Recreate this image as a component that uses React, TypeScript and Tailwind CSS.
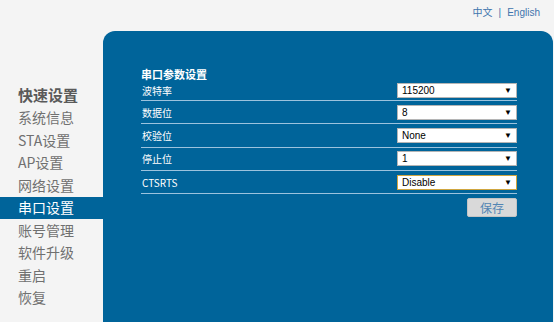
import { useState } from "react";

const menu = [
  "系统信息",
  "STA设置",
  "AP设置",
  "网络设置",
  "串口设置",
  "账号管理",
  "软件升级",
  "重启",
  "恢复",
];

const rows = [
  { label: "波特率", value: "115200", first: true },
  { label: "数据位", value: "8" },
  { label: "校验位", value: "None" },
  { label: "停止位", value: "1" },
  { label: "CTSRTS", value: "Disable", focus: true },
];

const Select = ({ value, focus }: { value: string; focus?: boolean }) => (
  <div
    className={`relative w-[120px] h-[15px] bg-white border flex items-center pl-[4px] font-['Liberation_Sans',Arial,sans-serif] text-[10px] text-black ${
      focus ? "border-[#d0a640]" : "border-[#b5b5b5]"
    }`}
  >
    {value}
    <span className="absolute right-[4px] top-[3px] text-[8px] leading-none">▼</span>
  </div>
);

export default function App() {
  const [active] = useState(4);
  return (
    <div className="w-[554px] h-[322px] overflow-hidden bg-[#f4f4f4] font-['Noto_Sans_CJK_SC','Noto_Sans',sans-serif]">
      <div className="h-[31px] flex justify-end pt-[5px] pr-[14px] text-[10px] text-[#3f74ad] font-['Liberation_Sans','Noto_Sans_CJK_SC',sans-serif]">
        <span>中文</span>
        <span className="mx-[6px]">|</span>
        <span>English</span>
      </div>
      <div className="flex">
        <div className="w-[103px] shrink-0 pt-[53px]">
          <div className="h-[22.5px] pl-[18px] flex items-center text-[15px] font-bold text-[#5a5a5a]">
            快速设置
          </div>
          {menu.map((m, i) => (
            <div
              key={m}
              className={`h-[22.5px] pl-[18px] flex items-center text-[14px] ${
                i === active ? "bg-[#00649a] text-white" : "text-[#707070]"
              }`}
            >
              {m}
            </div>
          ))}
        </div>
        <div className="flex-1 mr-[1px] h-[291px] bg-[#00649a] rounded-t-[12px] pl-[38px] pr-[36px] pt-[37px] text-white">
          <div className="h-[12px] flex items-center text-[11px] font-bold">串口参数设置</div>
          {rows.map((r) => (
            <div
              key={r.label}
              className={`${r.first ? "h-[20px]" : "h-[22.3px]"} box-content flex items-center justify-between border-b border-[#9cc3de] text-[10px]`}
            >
              <span className="pl-[1px]">{r.label}</span>
              <Select value={r.value} focus={r.focus} />
            </div>
          ))}
          <div className="flex justify-end mt-[4px]">
            <button className="w-[50px] h-[19px] rounded-[2px] bg-[#d9d9d9] border border-[#c4c4c4] text-[12px] text-[#5285b4] leading-none">
              保存
            </button>
          </div>
        </div>
      </div>
    </div>
  );
}
